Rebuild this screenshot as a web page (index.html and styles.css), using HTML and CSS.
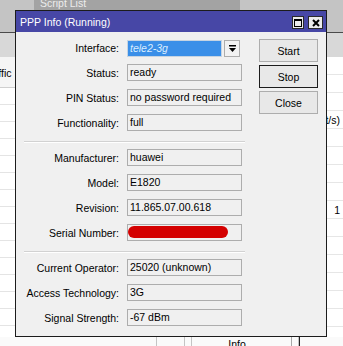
FILE: index.html
```html
<!DOCTYPE html>
<html lang="en">

<head>
    <meta charset="UTF-8">
    <meta name="viewport" content="width=device-width, initial-scale=1.0">
    <title>PPP Info</title>
    <link rel="stylesheet" href="styles.css">
</head>

<body>

    <div class="desk">
        <div class="topbar">
            <div class="tab">Script List</div>
        </div>
        <div class="band"></div>

        <div class="panes">
            <div class="pane-left">
                <div class="pane-head"><span class="head-text">Traffic</span></div>
                <div class="lrow"></div>
                <div class="lrow"></div>
                <div class="lrow"></div>
                <div class="lrow"></div>
                <div class="lrow"></div>
                <div class="lrow"></div>
                <div class="lrow"></div>
                <div class="lrow"></div>
                <div class="lrow"></div>
                <div class="lrow"></div>
                <div class="lrow"></div>
                <div class="lrow"></div>
                <div class="lrow"></div>
                <div class="lrow"></div>
            </div>
            <div class="pane-right">
                <div class="rrow"></div>
                <div class="rrow"></div>
                <div class="rrow"></div>
                <div class="rrow"><span>Rx Rate (bit/s)</span></div>
                <div class="rrow"></div>
                <div class="rrow"></div>
                <div class="rrow"></div>
                <div class="rrow"></div>
                <div class="rrow"><span>1</span></div>
                <div class="rrow"></div>
                <div class="rrow"></div>
                <div class="rrow"></div>
                <div class="rrow"></div>
                <div class="rrow"></div>
                <div class="rrow"></div>
            </div>
        </div>

        <div class="footer">
            <div class="fcell w157"></div>
            <div class="fcell w27"></div>
            <div class="fcell w7"></div>
            <div class="fbtn">Info...</div>
            <div class="fcell w6"></div>
            <div class="fdark"></div>
        </div>

        <!-- the PPP info window -->
        <div class="dialog">
            <div class="titlebar">
                <span class="title">PPP Info (Running)</span>
                <span class="tbtn sq">
                    <svg width="8" height="8" viewBox="0 0 8 8"><rect x="0.5" y="0.5" width="7" height="7" fill="none" stroke="#000"/><rect x="0" y="0" width="8" height="2" fill="#000"/></svg>
                </span>
                <span class="tbtn cls">
                    <svg width="8" height="8" viewBox="0 0 8 8"><path d="M1 1 L7 7 M7 1 L1 7" stroke="#000" stroke-width="2"/></svg>
                </span>
            </div>

            <div class="dlg-body">
                <div class="form">
                    <div class="row first">
                        <label>Interface:</label>
                        <div class="combo">
                            <span class="combo-sel">tele2-3g</span>
                            <span class="combo-btn">
                                <svg width="7" height="7" viewBox="0 0 7 7"><rect x="0" y="0" width="7" height="1.5" fill="#000"/><path d="M0 3 L7 3 L3.5 7 Z" fill="#000"/></svg>
                            </span>
                        </div>
                    </div>
                    <div class="row">
                        <label>Status:</label>
                        <div class="field">ready</div>
                    </div>
                    <div class="row">
                        <label>PIN Status:</label>
                        <div class="field">no password required</div>
                    </div>
                    <div class="row last">
                        <label>Functionality:</label>
                        <div class="field">full</div>
                    </div>

                    <div class="sep"></div>

                    <div class="row">
                        <label>Manufacturer:</label>
                        <div class="field">huawei</div>
                    </div>
                    <div class="row">
                        <label>Model:</label>
                        <div class="field">E1820</div>
                    </div>
                    <div class="row">
                        <label>Revision:</label>
                        <div class="field">11.865.07.00.618</div>
                    </div>
                    <div class="row last">
                        <label>Serial Number:</label>
                        <div class="field"><span class="redact"></span></div>
                    </div>

                    <div class="sep"></div>

                    <div class="row">
                        <label>Current Operator:</label>
                        <div class="field">25020 (unknown)</div>
                    </div>
                    <div class="row">
                        <label>Access Technology:</label>
                        <div class="field">3G</div>
                    </div>
                    <div class="row last">
                        <label>Signal Strength:</label>
                        <div class="field">-67 dBm</div>
                    </div>
                </div>

                <div class="buttons">
                    <button class="btn">Start</button>
                    <button class="btn default">Stop</button>
                    <button class="btn">Close</button>
                </div>
            </div>
        </div>
    </div>

</body>

</html>
```

FILE: styles.css
```css
body {
    margin: 0;
    font-family: "Liberation Sans", Arial, sans-serif;
    font-size: 10.5px;
    color: #000;
}

.desk {
    position: relative;
    width: 343px;
    height: 346px;
    overflow: hidden;
    background: #fff;
    display: flex;
    flex-direction: column;
}

/* background window */
.topbar {
    height: 32px;
    flex: none;
    background: #c4c4c4;
    border-bottom: 1px solid #4a4a4a;
    display: flex;
}

.tab {
    margin-left: 34px;
    width: 200px;
    height: 10px;
    background: #a3a3a3;
    color: #ececec;
    padding-left: 6px;
    line-height: 6px;
    overflow: hidden;
}

.band {
    height: 24px;
    flex: none;
    background: #d8d8d8;
}

.panes {
    height: 280px;
    flex: none;
    display: flex;
    overflow: hidden;
}

.pane-left {
    flex: 1;
}

.pane-head {
    height: 30px;
    background: #f5f5f5;
    border-bottom: 1px solid #cfcfcf;
    display: flex;
    align-items: center;
}

.head-text {
    margin-left: -17px;
    margin-top: 2px;
}

.lrow {
    height: 16px;
    border-bottom: 1px solid #e4e4e4;
}

.pane-right {
    width: 40px;
}

.rrow {
    height: 17px;
    border-bottom: 1px solid #e6e6e6;
    display: flex;
    justify-content: flex-end;
    padding-right: 3px;
    line-height: 18px;
    white-space: nowrap;
}

.rrow span {
    flex: none;
}

.footer {
    height: 9px;
    flex: none;
    display: flex;
    background: #fafafa;
}

.fcell {
    border-right: 1px solid #c4c4c4;
}

.w157 { width: 156px; }
.w27 { width: 27px; }
.w7 { width: 6px; }
.w6 { width: 6px; }

.fbtn {
    width: 99px;
    border-right: 1px solid #a8a8a8;
    text-align: center;
    line-height: 14px;
    overflow: hidden;
}

.fdark {
    width: 1px;
    background: #222;
}

/* dialog */
.dialog {
    position: absolute;
    left: 15px;
    top: 10px;
    width: 312px;
    height: 327px;
    box-sizing: border-box;
    border: 1px solid #1c1c1c;
    background: #f0f0f0;
    display: flex;
    flex-direction: column;
}

.titlebar {
    height: 21px;
    flex: none;
    background: #4747a6;
    color: #fff;
    display: flex;
    align-items: center;
    padding-left: 4px;
    padding-right: 3px;
}

.title {
    flex: 1;
    padding-top: 1px;
}

.tbtn {
    height: 13px;
    box-sizing: border-box;
    background: #ececec;
    border: 1px solid #2a2a2a;
    display: flex;
    align-items: center;
    justify-content: center;
    margin-top: 2px;
}

.tbtn.sq {
    width: 12px;
    margin-right: 4px;
}

.tbtn.cls {
    width: 15px;
}

.dlg-body {
    display: flex;
}

.form {
    width: 230px;
    padding-top: 8px;
    display: flex;
    flex-direction: column;
}

.row {
    display: flex;
    align-items: center;
    height: 17px;
    margin-bottom: 8px;
}

.row.first {
    height: 16px;
}

.row.last {
    margin-bottom: 0;
}

.row label {
    width: 103px;
    margin-right: 8px;
    text-align: right;
    white-space: nowrap;
}

.field {
    width: 115px;
    height: 17px;
    box-sizing: border-box;
    border: 1px solid #adadad;
    padding-left: 2px;
    line-height: 15px;
    white-space: nowrap;
    overflow: hidden;
}

.redact {
    display: block;
    width: 100px;
    height: 12px;
    margin-left: -2px;
    margin-top: 1px;
    background: #d40000;
    border-radius: 6px;
}

.combo {
    display: flex;
    height: 17px;
}

.combo-sel {
    width: 95px;
    box-sizing: border-box;
    border: 1px solid #c6d4e2;
    background: #3a8fe8;
    color: #d8ecff;
    font-style: italic;
    padding-left: 2px;
    line-height: 15px;
}

.combo-btn {
    width: 16px;
    margin-left: 2px;
    box-sizing: border-box;
    border: 1px solid #adadad;
    background: #f2f2f2;
    display: flex;
    align-items: center;
    justify-content: center;
}

.sep {
    margin: 10px 0 6px 8px;
    width: 221px;
    height: 1px;
    background: #d2d2d2;
    border-bottom: 1px solid #fff;
}

.buttons {
    margin-left: 13px;
    padding-top: 7px;
    display: flex;
    flex-direction: column;
    gap: 3px;
}

.btn {
    width: 59px;
    height: 23px;
    font-family: "Liberation Sans", Arial, sans-serif;
    font-size: 10.5px;
    color: #000;
    background: #e8e8e8;
    border: 1px solid #adadad;
    padding: 0;
}

.btn.default {
    border-color: #1c1c1c;
}
```
